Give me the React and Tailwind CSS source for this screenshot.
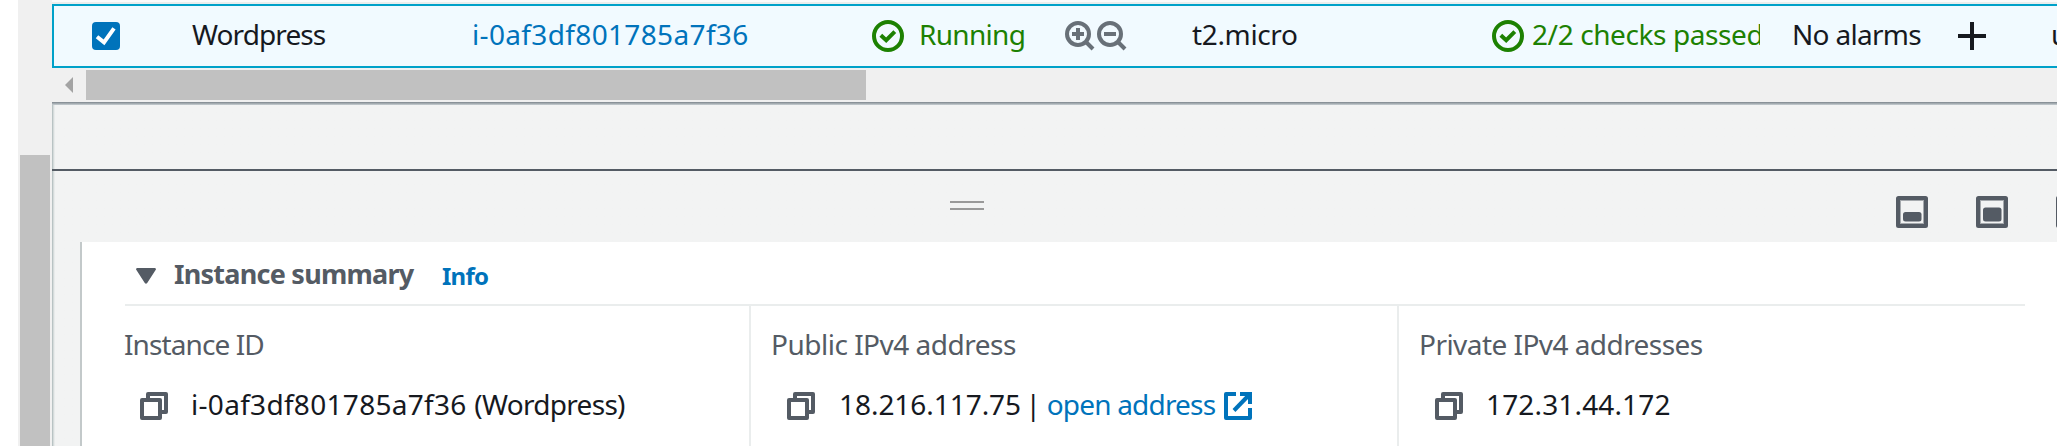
function StatusOk() {
  return (
    <svg className="size-8 shrink-0" viewBox="0 0 16 16" fill="none" stroke="#1d8102" strokeWidth="2">
      <circle cx="8" cy="8" r="7" />
      <path d="M4.4 7.6 7.1 10.1 11.4 5.8" />
    </svg>
  );
}

function Magnifier({ plus }) {
  return (
    <svg className="h-[30px] w-[30px] shrink-0" viewBox="0 0 30 30" fill="none" stroke="#687078" strokeWidth="4">
      <circle cx="13" cy="13" r="11" />
      <path d="M20.5 20.5 28 28" />
      <path d="M7 13H19" />
      {plus && <path d="M13 7V19" />}
    </svg>
  );
}

function CopyIcon() {
  return (
    <svg className="ml-4 size-7 shrink-0" viewBox="0 0 28 28" fill="none" stroke="#545b64" strokeWidth="4" strokeLinejoin="round">
      <path d="M2 8H20V26H2Z" />
      <path d="M8 6V2H26V20H22" />
    </svg>
  );
}

function ExternalIcon() {
  return (
    <svg className="ml-[9px] size-7 shrink-0" viewBox="0 0 28 28" fill="none" stroke="#0073bb" strokeWidth="4" strokeLinejoin="round">
      <path d="M12 2H2V26H26V16" />
      <path d="M16 2H26V12" strokeLinejoin="miter" />
      <path d="M10 18.5 25 3" />
    </svg>
  );
}

function PanelIcon({ top, height }) {
  return (
    <svg className="size-8 shrink-0" viewBox="0 0 32 32">
      <rect x="2" y="2" width="28" height="28" rx="0.5" fill="#f2f3f3" stroke="#545b64" strokeWidth="4" />
      <rect x="4.5" y="4.5" width="23" height="23" fill="none" stroke="#a5a9ad" strokeWidth="1" />
      <rect x="7" y={top} width="18.5" height={height} rx="2.5" fill="#545b64" />
    </svg>
  );
}

function Detail({ label, labelClass, className, children }) {
  return (
    <div className={`flex shrink-0 flex-col pt-5 ${className}`}>
      <div className={`h-9 whitespace-nowrap text-[#545b64] ${labelClass}`}>{label}</div>
      <div className="mt-[26px] flex h-9 items-center whitespace-nowrap">{children}</div>
    </div>
  );
}

export default function App() {
  return (
    <div className="flex h-[446px] w-[2057px] overflow-hidden bg-white font-['Noto_Sans','Open_Sans',sans-serif] text-[28px] leading-9 text-[#16191f]">
      <div className="ml-[18px] flex w-[34px] shrink-0 flex-col items-center bg-[#f0f0f0] pt-[155px]">
        <div className="w-[30px] flex-1 bg-[#c1c1c1]" />
      </div>

      <main className="flex w-[2005px] shrink-0 flex-col bg-gradient-to-r from-[#aab7b8] from-[0px] via-[#d5dbdb] via-[1.5px] to-[#f2f3f3] to-[3px]">
        <div className="h-0.5 shrink-0 bg-[#fafafa]" />
        <div className="h-0.5 shrink-0 bg-[#eaeded]" />

        <div className="flex h-16 shrink-0 items-center overflow-hidden border-2 border-r-0 border-[#00a1c9] bg-[#f1faff] whitespace-nowrap">
          <div className="w-[138px] shrink-0 pl-[38px]">
            <svg className="size-7" viewBox="0 0 28 28">
              <rect width="28" height="28" rx="4" fill="#0073bb" />
              <path d="M5 14.8 12 20.3 22 6.3" fill="none" stroke="#fff" strokeWidth="4" />
            </svg>
          </div>
          <div className="w-[280px] shrink-0 pb-1 tracking-[-0.9px]">Wordpress</div>
          <a className="w-[400px] shrink-0 pb-1 tracking-[0.35px] text-[#0073bb]">i-0af3df801785a7f36</a>
          <div className="flex w-[193px] shrink-0 items-center gap-[15px] text-[#1d8102]">
            <StatusOk />
            <span className="pb-1 tracking-[-0.7px]">Running</span>
          </div>
          <div className="flex w-[127px] shrink-0 items-center gap-0.5">
            <Magnifier plus />
            <Magnifier />
          </div>
          <div className="w-[300px] shrink-0 pb-1 tracking-[-0.35px]">t2.micro</div>
          <div className="flex w-[300px] shrink-0 items-center gap-2">
            <StatusOk />
            <div className="w-[228px] overflow-hidden pb-1 tracking-[-0.4px] text-[#1d8102]">2/2 checks passed</div>
          </div>
          <div className="w-[166px] shrink-0 pb-1 tracking-[-0.7px]">No alarms</div>
          <div className="w-[93px] shrink-0">
            <svg className="size-7" viewBox="0 0 28 28" stroke="#16191f" strokeWidth="4">
              <path d="M0 14H28M14 0V28" />
            </svg>
          </div>
          <div className="shrink-0 pb-1">us-east-2b</div>
        </div>

        <div className="flex h-[34px] shrink-0 items-center bg-[#f0f0f0] pl-[13px]">
          <svg className="mr-[13px] h-4 w-2" viewBox="0 0 8 16" fill="#a3a3a3">
            <path d="M8 0V16L0 8Z" />
          </svg>
          <div className="h-[30px] w-[780px] bg-[#c1c1c1]" />
        </div>
        <div className="h-[3px] shrink-0 bg-gradient-to-b from-[#7c858c] to-[#c9d0d4]" />

        <div className="h-16 shrink-0" />
        <div className="h-0.5 shrink-0 bg-[#545b64]" />

        <div className="flex h-[71px] shrink-0">
          <div className="mt-[30px] ml-[898px] h-[9px] w-[34px] shrink-0 border-y-2 border-[#999]" />
          <div className="mt-[25px] ml-[912px] flex shrink-0 gap-12">
            <PanelIcon top={16} height={9.5} />
            <PanelIcon top={11.5} height={14} />
            <PanelIcon top={7} height={18.5} />
          </div>
        </div>

        <section className="ml-7 flex flex-1 flex-col border-l-2 border-[#c3c9ca] bg-white">
          <div className="ml-[43px] flex h-16 w-[1900px] shrink-0 border-b-2 border-[#eaeded]">
            <svg className="mt-[26px] ml-[11px] h-4 w-5 shrink-0" viewBox="0 0 20 16" fill="#545b64">
              <path d="M1 0H19Q20.5 .8 19.6 2L11.2 15Q10 16.6 8.8 15L.4 2Q-.5 .8 1 0Z" />
            </svg>
            <h2 className="mt-[14px] ml-[18px] w-[268px] text-[27px] font-bold tracking-[-0.75px] text-[#545b64]">Instance summary</h2>
            <a className="mt-4 text-2xl leading-9 font-bold tracking-[-0.75px] text-[#0073bb]">Info</a>
          </div>
          <div className="ml-[42px] flex flex-1">
            <Detail label="Instance ID" labelClass="tracking-[-0.9px]" className="w-[625px]">
              <CopyIcon />
              <span className="ml-[23px] pb-1 tracking-[0.3px]">
                i-0af3df801785a7f36 <span className="tracking-[-0.7px]">(Wordpress)</span>
              </span>
            </Detail>
            <Detail label="Public IPv4 address" labelClass="tracking-[-0.5px]" className="w-[648px] border-l-2 border-[#eaeded] pl-5">
              <CopyIcon />
              <span className="ml-6 pb-1 tracking-[-0.05px]">
                18.216.117.75
                <span className="-ml-0.5 tracking-[-0.8px]"> | <a className="text-[#0073bb]">open address</a></span>
              </span>
              <ExternalIcon />
            </Detail>
            <Detail label="Private IPv4 addresses" labelClass="tracking-[-0.55px]" className="w-[640px] border-l-2 border-[#eaeded] pl-5">
              <CopyIcon />
              <span className="ml-[23px] pb-1 tracking-[0.15px]">172.31.44.172</span>
            </Detail>
          </div>
        </section>
      </main>
    </div>
  );
}
